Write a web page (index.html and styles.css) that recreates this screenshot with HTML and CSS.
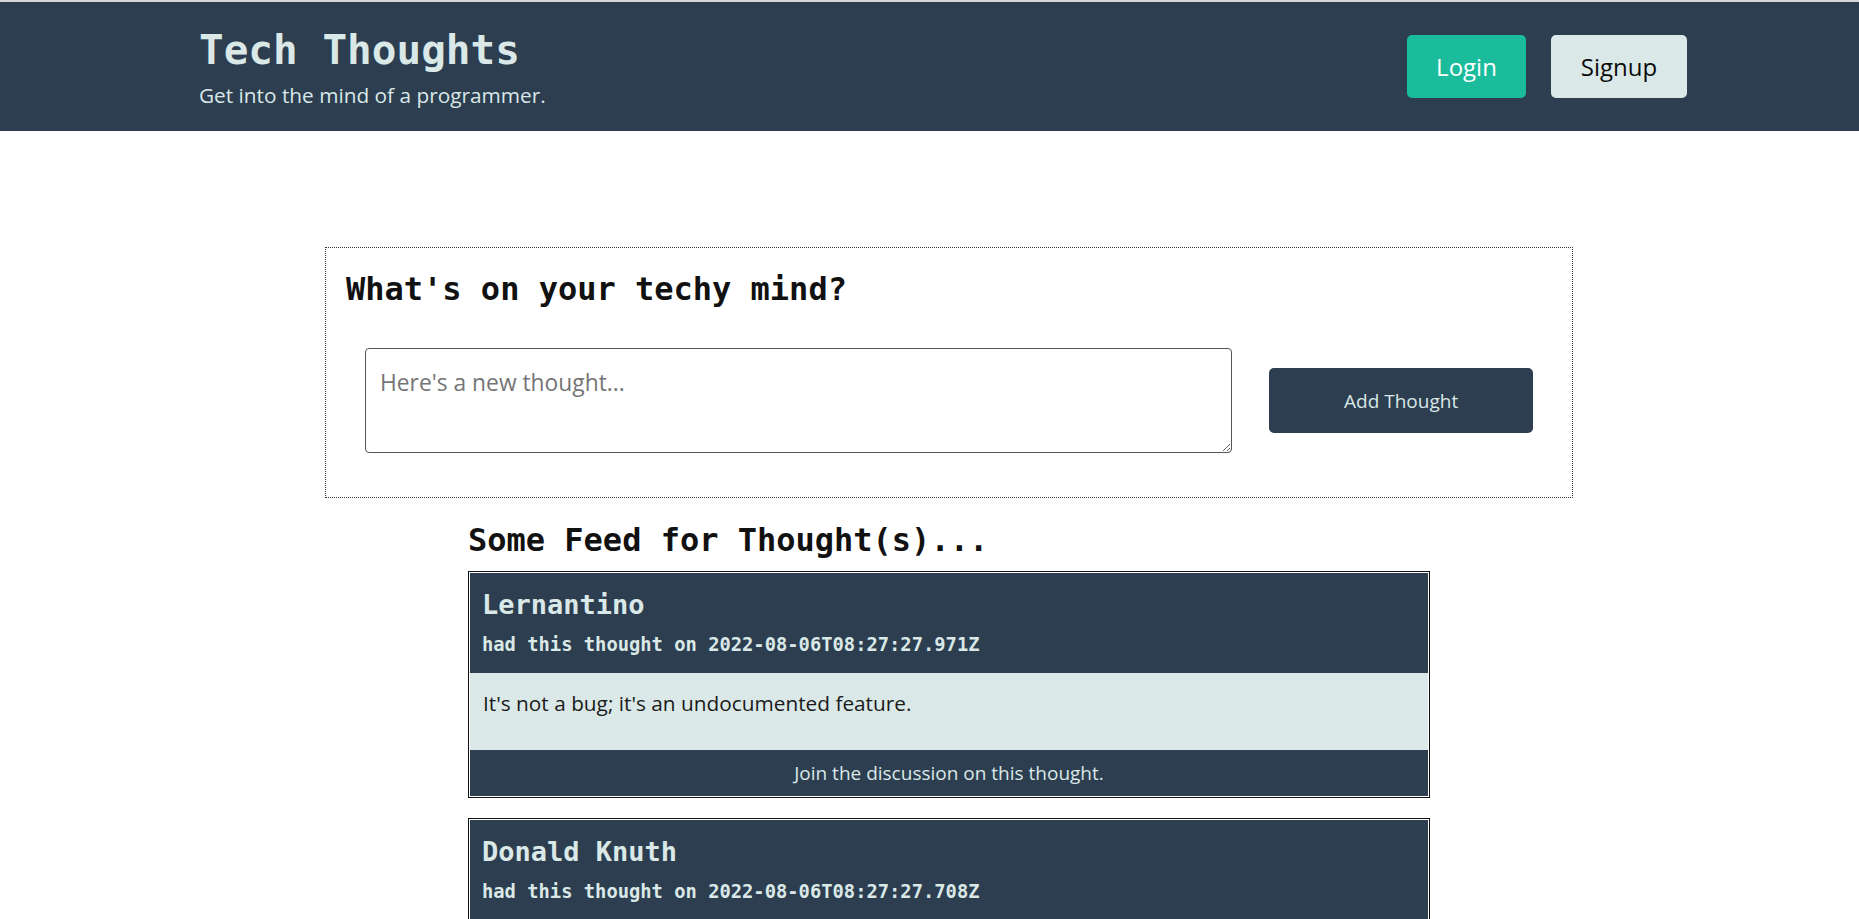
FILE: index.html
```html
<!DOCTYPE html>
<html lang="en">
<head>
<meta charset="utf-8">
<title>Tech Thoughts</title>
<link rel="stylesheet" href="styles.css">
</head>
<body>
<header class="site-header">
  <div class="header-inner">
    <div class="brand">
      <h1 class="brand-title">Tech Thoughts</h1>
      <p class="brand-sub">Get into the mind of a programmer.</p>
    </div>
    <nav class="auth">
      <a class="btn btn-login" href="#">Login</a>
      <a class="btn btn-signup" href="#">Signup</a>
    </nav>
  </div>
</header>
<main class="main">
  <section class="compose">
    <h3 class="compose-title">What's on your techy mind?</h3>
    <form class="compose-form">
      <textarea class="compose-input" placeholder="Here's a new thought..."></textarea>
      <button type="button" class="btn-add">Add Thought</button>
    </form>
  </section>
  <section class="feed">
    <h3 class="feed-title">Some Feed for Thought(s)...</h3>
    <article class="card">
      <div class="card-head">
        <div class="card-user">Lernantino</div>
        <div class="card-date">had this thought on 2022-08-06T08:27:27.971Z</div>
      </div>
      <div class="card-body">It's not a bug; it's an undocumented feature.</div>
      <a class="card-foot" href="#">Join the discussion on this thought.</a>
    </article>
    <article class="card">
      <div class="card-head">
        <div class="card-user">Donald Knuth</div>
        <div class="card-date">had this thought on 2022-08-06T08:27:27.708Z</div>
      </div>
      <div class="card-body">Beware of bugs in the above code; I have only proved it correct, not tried it.</div>
      <a class="card-foot" href="#">Join the discussion on this thought.</a>
    </article>
  </section>
</main>
</body>
</html>
```
FILE: styles.css
```css
html, body {
  margin: 0;
  padding: 0;
  background: #ffffff;
}
body {
  font-family: "Open Sans", "Noto Sans", sans-serif;
  color: #0c0c0c;
}
.site-header {
  background: #2c3e50;
  border-top: 2px solid #d6d6d6;
  padding: 28px 0 24px;
}
.header-inner {
  display: flex;
  justify-content: space-between;
  align-items: center;
  padding: 0 172px 0 199px;
}
.brand-title {
  margin: 0;
  font-family: "DejaVu Sans Mono", monospace;
  font-weight: 700;
  font-size: 41px;
  line-height: 1;
  color: #dae8e7;
}
.brand-sub {
  margin: 12px 0 0;
  font-size: 20.8px;
  line-height: 24px;
  color: #dae8e7;
}
.auth {
  display: flex;
  gap: 25px;
  margin-bottom: 4px;
}
.btn {
  display: flex;
  align-items: center;
  justify-content: center;
  height: 63px;
  border-radius: 5px;
  font-size: 24px;
  text-decoration: none;
  box-sizing: border-box;
}
.btn-login {
  width: 119px;
  background: #1abc9c;
  color: #ffffff;
}
.btn-signup {
  width: 136px;
  background: #dae8e7;
  color: #0c0c0c;
}
.main {
  width: 1248px;
  margin: 116px 0 0 325px;
}
.compose {
  border: 1px dotted #333;
  padding: 22px 20px 44px;
}
.compose-title, .feed-title {
  margin: 0;
  font-family: "DejaVu Sans Mono", monospace;
  font-weight: 700;
  font-size: 32px;
  line-height: 38.4px;
  color: #111;
}
.compose-form {
  display: flex;
  align-items: center;
  gap: 37px;
  margin-top: 40px;
  padding: 0 19px;
}
.compose-input {
  width: 868px;
  height: 105px;
  box-sizing: border-box;
  border: 1px solid #555;
  border-radius: 4px;
  padding: 19px 14px 10px;
  font-family: "Open Sans", sans-serif;
  font-size: 22.8px;
  line-height: 30px;
  resize: vertical;
  margin: 0;
}
.compose-input::placeholder {
  color: #757575;
}
.btn-add {
  width: 264px;
  height: 65px;
  border: none;
  border-radius: 5px;
  background: #2c3e50;
  color: #dae8e7;
  font-family: "Open Sans", sans-serif;
  font-size: 19px;
}
.feed {
  width: 962px;
  margin: 23px auto 0;
}
.feed-title {
  margin-bottom: 11px;
}
.card {
  border: 1px solid #111;
  padding: 1px;
  background: #fff;
  margin-bottom: 20px;
}
.card-head {
  background: #2c3e50;
  color: #dae8e7;
  padding: 16px 12px 17px;
  font-family: "DejaVu Sans Mono", monospace;
  font-weight: 700;
}
.card-user {
  font-size: 27px;
  line-height: 32.4px;
}
.card-date {
  margin-top: 12.6px;
  font-size: 18.8px;
  line-height: 22.6px;
}
.card-body {
  background: #dae8e7;
  padding: 15px 13px 32px;
  font-size: 20.8px;
  line-height: 30px;
  color: #1a1a1a;
}
.card-foot {
  display: block;
  background: #2c3e50;
  color: #dae8e7;
  text-align: center;
  text-decoration: none;
  font-size: 19px;
  line-height: 46px;
}
```
